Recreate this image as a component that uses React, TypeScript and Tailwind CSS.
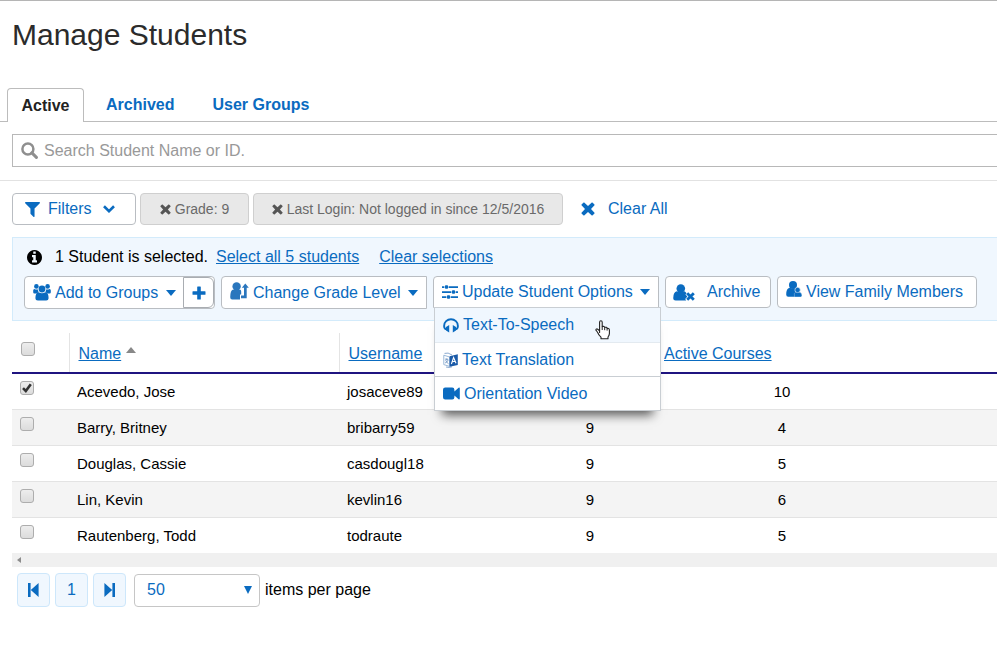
import React, { useState } from "react";

const FONT = "font-['Liberation_Sans',Arial,sans-serif]";

type IconProps = { className?: string };

function FilterIcon({ className }: IconProps) {
  return (
    <svg viewBox="192 256 1408 1408" className={className} fill="currentColor" aria-hidden="true">
      <path d="M1595 295q17 41-14 70l-493 493v742q0 42-39 59-13 5-25 5-27 0-45-19l-256-256q-19-19-19-45v-486l-493-493q-31-29-14-70 17-39 59-39h1280q42 0 59 39z" />
    </svg>
  );
}

function SearchIcon({ className }: IconProps) {
  return (
    <svg viewBox="0 0 17 17" className={className} aria-hidden="true">
      <circle cx="6.9" cy="6.9" r="5.5" fill="none" stroke="currentColor" strokeWidth="2.5" />
      <path d="M10.9 10.9L15.4 15.4" stroke="currentColor" strokeWidth="3" strokeLinecap="round" />
    </svg>
  );
}

function InfoIcon({ className }: IconProps) {
  return (
    <svg viewBox="128 128 1536 1536" className={className} fill="currentColor" aria-hidden="true">
      <path d="M1152 1376v-160q0-14-9-23t-23-9h-96v-512q0-14-9-23t-23-9h-320q-14 0-23 9t-9 23v160q0 14 9 23t23 9h96v320h-96q-14 0-23 9t-9 23v160q0 14 9 23t23 9h448q14 0 23-9t9-23zm-128-896v-160q0-14-9-23t-23-9h-192q-14 0-23 9t-9 23v160q0 14 9 23t23 9h192q14 0 23-9t9-23zm640 416q0 209-103 385.5t-279.5 279.5-385.5 103-385.5-103-279.5-279.5-103-385.5 103-385.5 279.5-279.5 385.5-103 385.5 103 279.5 279.5 103 385.5z" />
    </svg>
  );
}

function RemoveIcon({ className }: IconProps) {
  return (
    <svg viewBox="0 0 14 14" className={className} fill="currentColor" aria-hidden="true">
      <path d="M3.2 0.5 L7 4 L10.8 0.5 H11.4 L13.5 2.6 V3.2 L10 7 L13.5 10.8 V11.4 L11.4 13.5 H10.8 L7 10 L3.2 13.5 H2.6 L0.5 11.4 V10.8 L4 7 L0.5 3.2 V2.6 L2.6 0.5 Z" />
    </svg>
  );
}

function ChevronIcon({ className }: IconProps) {
  return (
    <svg viewBox="0 0 12 8" className={className} fill="none" stroke="currentColor" strokeWidth="2.6" aria-hidden="true">
      <path d="M1 1.3 L6 6.2 L11 1.3" />
    </svg>
  );
}

function PlusIcon({ className }: IconProps) {
  return (
    <svg viewBox="0 0 14 14" className={className} fill="currentColor" aria-hidden="true">
      <path d="M5.7 0.5h2.6a.5.5 0 0 1 .5.5v4.2H13a.5.5 0 0 1 .5.5v2.6a.5.5 0 0 1-.5.5H8.8V13a.5.5 0 0 1-.5.5H5.7a.5.5 0 0 1-.5-.5V8.8H1a.5.5 0 0 1-.5-.5V5.7a.5.5 0 0 1 .5-.5h4.2V1a.5.5 0 0 1 .5-.5z" />
    </svg>
  );
}

function CaretIcon({ className }: IconProps) {
  return (
    <svg viewBox="0 0 10 6" className={className} fill="currentColor" aria-hidden="true">
      <path d="M0 0h10L5 6z" />
    </svg>
  );
}

function GroupIcon({ className }: IconProps) {
  return (
    <svg viewBox="0 0 18 17" className={className} fill="currentColor" aria-hidden="true">
      <circle cx="3.4" cy="2.4" r="2.3" />
      <circle cx="14.6" cy="2.4" r="2.3" />
      <circle cx="9" cy="5" r="3.4" />
      <path d="M0.2 8.2V6.4Q0.2 5 1.4 4.9Q3.4 6 4.7 5.3Q4.9 7 5.7 8.2Q4.6 8.6 3.8 9.4H1.4Q0.2 9.4 0.2 8.2z" />
      <path d="M17.8 8.2V6.4Q17.8 5 16.6 4.9Q14.6 6 13.3 5.3Q13.1 7 12.3 8.2Q13.4 8.6 14.2 9.4H16.6Q17.8 9.4 17.8 8.2z" />
      <path d="M5.6 8.3Q9 10.2 12.4 8.3Q15.6 8.6 15.6 14.2Q15.6 16.6 13.2 16.6H4.8Q2.4 16.6 2.4 14.2Q2.4 8.6 5.6 8.3z" />
    </svg>
  );
}

function GradeIcon({ className }: IconProps) {
  return (
    <svg viewBox="0 0 19 18" className={className} fill="#2a76bd" aria-hidden="true">
      <circle cx="6.6" cy="4.4" r="4.2" />
      <path d="M3.2 7.4Q6.6 8.8 10 7.4Q11.2 8 11.2 9.4V12.6H10V17.6H2.2Q0.2 17.6 0.2 15.2Q0.2 8.2 3.2 7.4z" />
      <path d="M15.3 1.4L18.8 5.8H16.7V16.2H11V13.6H14V5.8H11.8z" />
    </svg>
  );
}

function SlidersIcon({ className }: IconProps) {
  return (
    <svg viewBox="0 0 16 14" className={className} fill="currentColor" aria-hidden="true">
      <path d="M0 1.2h2.4v1.7H0zM6.6 1.2H16v1.7H6.6zM0 6.2h9.4v1.7H0zM13.6 6.2H16v1.7h-2.4zM0 11.2h4.4v1.7H0zM8.6 11.2H16v1.7H8.6z" />
      <rect x="3" y="0.3" width="3" height="3.5" rx="0.7" />
      <rect x="10" y="5.3" width="3" height="3.5" rx="0.7" />
      <rect x="5" y="10.3" width="3" height="3.5" rx="0.7" />
    </svg>
  );
}

function UserRemoveIcon({ className }: IconProps) {
  return (
    <svg viewBox="0 0 22 17" className={className} aria-hidden="true">
      <circle cx="7.8" cy="4.5" r="4.3" fill="currentColor" />
      <path
        d="M3.8 7.2Q7.8 8.8 11.6 7.2Q12.8 8 13.6 9.6L12.4 10.4L14.4 12.6L12.2 15L13.2 16.6H2.6Q0.2 16.6 0.2 14.2Q0.2 8 3.8 7.2z"
        fill="currentColor"
      />
      <path d="M14.2 9.2L20.8 15.8M20.8 9.2L14.2 15.8" stroke="currentColor" strokeWidth="2.8" />
    </svg>
  );
}

function FamilyIcon({ className }: IconProps) {
  return (
    <svg viewBox="0 0 16 16" className={className} aria-hidden="true">
      <circle cx="7" cy="4.1" r="4" fill="currentColor" />
      <path d="M3.6 6.8Q7 8.2 10.4 6.8L13 10V15.8H2.2Q0.2 15.8 0.2 13.6Q0.2 7.4 3.6 6.8z" fill="currentColor" />
      <circle cx="11.6" cy="9" r="2.7" fill="currentColor" stroke="#fff" strokeWidth="0.6" />
      <path
        d="M9.6 11.2Q11.6 12 13.4 11.2Q15.9 11.6 15.9 14.6Q15.9 15.9 14.6 15.9H8.6Q7.4 12 9.6 11.2z"
        fill="currentColor"
        stroke="#fff"
        strokeWidth="0.3"
      />
    </svg>
  );
}

function HeadphonesIcon({ className }: IconProps) {
  return (
    <svg viewBox="0 0 16 15" className={className} aria-hidden="true">
      <path
        d="M3.4 11.4Q1.1 10.6 1.1 7.9A6.9 6.7 0 0 1 14.9 7.9Q14.9 10.6 12.6 11.4"
        fill="none"
        stroke="currentColor"
        strokeWidth="1.9"
      />
      <path d="M3 9L6.2 7V14.4L3 12.4zM13 9L9.8 7V14.4L13 12.4z" fill="currentColor" />
    </svg>
  );
}

function TranslateIcon({ className }: IconProps) {
  return (
    <svg viewBox="0 0 15 16" className={className} aria-hidden="true">
      <path d="M0.8 3.2L6.6 5V14.4L0.8 12.6z" fill="#fff" stroke="#8fb0d4" strokeWidth="0.9" />
      <path d="M2 7L5.6 8M3.9 6V8M4.9 8.2Q4.2 10.6 2 11M2.6 8Q3.6 10.8 5.6 11.8" fill="none" stroke="#6c93c2" strokeWidth="0.8" />
      <path d="M1.5 1.4Q5 0 9 3M3 15Q6 16 9 14.8" fill="none" stroke="#7d9fca" strokeWidth="0.9" />
      <path d="M6.6 4.2L14.8 2.2V13L6.6 14.8z" fill="#1b5ba8" />
      <path d="M8.4 12L10.6 5.6L13 11.2M9.4 9.8L12.1 9.2" fill="none" stroke="#fff" strokeWidth="1.1" />
    </svg>
  );
}

function VideoIcon({ className }: IconProps) {
  return (
    <svg viewBox="0 0 17 13" className={className} fill="currentColor" aria-hidden="true">
      <path d="M2.2 0.5H9.2Q11.4 0.5 11.4 2.7V4.6L15.6 0.8Q16.8 0.2 16.8 1.4V11.6Q16.8 12.8 15.6 12.2L11.4 8.4V10.3Q11.4 12.5 9.2 12.5H2.2Q0 12.5 0 10.3V2.7Q0 0.5 2.2 0.5z" />
    </svg>
  );
}

function HandCursor({ className }: IconProps) {
  return (
    <svg viewBox="0 0 16 20" className={className} aria-hidden="true">
      <path
        d="M4.6 12.4V2.2Q4.6 0.7 5.9 0.7Q7.2 0.7 7.2 2.2V6.6Q9.4 5.8 9.7 7.4Q11.8 6.8 12.1 8.4Q14.4 8 14.4 10.2V13.6Q14.4 15.4 13 17V18.8H6V17.2Q3.6 15 2.8 12.8Q1.8 11.2 0.9 10.2Q0.9 8.8 2.2 8.9Q3.4 9.3 4.6 11z"
        fill="#fff"
        stroke="#222"
        strokeWidth="1.1"
        strokeLinejoin="round"
      />
      <path d="M7.2 6.6V10M9.7 7.4V10.2M12.1 8.4V10.6" fill="none" stroke="#222" strokeWidth="1" />
    </svg>
  );
}

function FirstPageIcon({ className }: IconProps) {
  return (
    <svg viewBox="0 0 11 14" className={className} fill="currentColor" aria-hidden="true">
      <path d="M0 0h2.6v14H0zM10.6 0v14L2.8 7z" />
    </svg>
  );
}

const BUTTON = "flex items-center border border-[#b9bdc2] bg-white text-[#0a6bc0]";
const PAGER = "flex h-[34px] w-[33px] items-center justify-center rounded border border-[#cde7fb] bg-[#f0f7fe]";

function Checkbox({ label, checked = false }: { label: string; checked?: boolean }) {
  return (
    <span className="relative block size-[14px]">
      <input
        type="checkbox"
        aria-label={label}
        defaultChecked={checked}
        className="peer block size-[14px] appearance-none rounded-[3px] border border-[#adadad] bg-gradient-to-b from-[#ededed] to-[#dcdcdc]"
      />
      <svg viewBox="0 0 14 14" className="pointer-events-none absolute inset-0 hidden peer-checked:block" aria-hidden="true">
        <path d="M3 7.2L5.8 10L10.8 3.2" fill="none" stroke="#333" strokeWidth="2.6" />
      </svg>
    </span>
  );
}

const TABS = ["Active", "Archived", "User Groups"];

const STUDENTS = [
  { name: "Acevedo, Jose", username: "josaceve89", grade: null, courses: 10, selected: true },
  { name: "Barry, Britney", username: "bribarry59", grade: 9, courses: 4, selected: false },
  { name: "Douglas, Cassie", username: "casdougl18", grade: 9, courses: 5, selected: false },
  { name: "Lin, Kevin", username: "kevlin16", grade: 9, courses: 6, selected: false },
  { name: "Rautenberg, Todd", username: "todraute", grade: 9, courses: 5, selected: false },
];

function Chip({ text, className }: { text: string; className: string }) {
  return (
    <button
      type="button"
      className={`flex h-8 items-center justify-center gap-1 rounded border border-[#cfcfcf] bg-[#e8e8e8] text-sm text-[#6a6a6a] ${className}`}
    >
      <RemoveIcon className="size-[11px] text-[#555]" />
      {text}
    </button>
  );
}

function OptionsMenu() {
  const item = "flex h-[34px] w-full items-center gap-1 pl-2 text-left";
  return (
    <div className="absolute top-[31px] left-px z-10 w-[227px] border border-[#c9ced3] bg-white text-[#0a6bc0] shadow-[0_12px_10px_-8px_rgba(0,0,0,0.65)]">
      <button type="button" className={`${item} bg-[#f0f7fe]`}>
        <HeadphonesIcon className="h-[15px] w-4" />
        Text-To-Speech
      </button>
      <button type="button" className={`${item} border-t border-[#e3eaf0]`}>
        <TranslateIcon className="h-4 w-[15px]" />
        Text Translation
      </button>
      <button type="button" className={`${item} border-t border-[#c9ced3]`}>
        <VideoIcon className="h-[13px] w-[17px]" />
        Orientation Video
      </button>
      <HandCursor className="absolute top-3 left-40 h-5 w-4" />
    </div>
  );
}

export default function App() {
  const [tab, setTab] = useState("Active");
  return (
    <main className={`${FONT} min-h-screen overflow-hidden border-t border-[#b5b5b5] bg-white text-base text-black`}>
      <h1 className="px-3 pt-4 text-[30px] leading-9 text-[#2b2b2b]">Manage Students</h1>

      <nav className="mt-[35px] flex h-[34px] border-b border-[#bcbcbc] pl-[7px] font-bold">
        {TABS.map((name) => (
          <button
            key={name}
            type="button"
            onClick={() => setTab(name)}
            className={
              name === tab
                ? "mr-[3px] -mb-px w-[77px] rounded-t border border-b-0 border-[#bcbcbc] bg-white text-[#222]"
                : "px-[19px] text-[#0a6bc0]"
            }
          >
            {name}
          </button>
        ))}
      </nav>

      <div className="border-b border-[#e2e2e2] pt-3 pb-[13px] pl-3">
        <label className="flex h-[33px] items-center gap-[6px] border border-r-0 border-[#b8b8b8] pl-2">
          <SearchIcon className="size-[17px] text-[#8f8f8f]" />
          <input
            type="text"
            aria-label="Search students"
            placeholder="Search Student Name or ID."
            className="h-full flex-1 bg-transparent outline-none placeholder:text-[#999]"
          />
        </label>
      </div>

      <div className="flex items-center pt-3 pl-3">
        <button type="button" className={`${BUTTON} h-8 w-[124px] rounded pl-3`}>
          <FilterIcon className="size-[15px]" />
          <span className="ml-2">Filters</span>
          <ChevronIcon className="ml-[11px] h-2 w-3" />
        </button>
        <Chip text="Grade: 9" className="ml-1 w-[109px]" />
        <Chip text="Last Login: Not logged in since 12/5/2016" className="ml-1 w-[310px]" />
        <button type="button" className="ml-[18px] flex items-center gap-[13px] text-[#0a6bc0]">
          <RemoveIcon className="size-[14px]" />
          Clear All
        </button>
      </div>

      <section className="mt-3 ml-3 border border-r-0 border-[#d3ebfb] bg-[#f0f7fe] pt-[7px] pb-[11px] pl-[11px]">
        <div className="flex h-6 items-center">
          <InfoIcon className="ml-[3px] size-[15px]" />
          <p className="ml-[13px]">1 Student is selected.</p>
          <a href="#all" className="ml-2 text-[#0a6bc0] underline">Select all 5 students</a>
          <a href="#clear" className="ml-5 text-[#0a6bc0] underline">Clear selections</a>
        </div>
        <div className="mt-[7px] flex items-start gap-[6px]">
          <div className="flex h-[33px] rounded border border-[#b9bdc2] bg-white text-[#0a6bc0]">
            <button type="button" className="flex w-[158px] items-center pr-[7px] pl-2">
              <GroupIcon className="h-[17px] w-[18px]" />
              <span className="ml-1">Add to Groups</span>
              <CaretIcon className="ml-auto h-[6px] w-[10px]" />
            </button>
            <button
              type="button"
              aria-label="Add group"
              className="flex h-[31px] w-[31px] items-center justify-center rounded-r-md border border-[#a9adb2]"
            >
              <PlusIcon className="size-[14px]" />
            </button>
          </div>
          <button type="button" className={`${BUTTON} h-[33px] w-[206px] rounded-l px-2`}>
            <GradeIcon className="mb-1 h-[18px] w-[19px]" />
            <span className="ml-1">Change Grade Level</span>
            <CaretIcon className="ml-auto h-[6px] w-[10px]" />
          </button>
          <div className="relative">
            <button type="button" aria-expanded="true" className={`${BUTTON} h-8 w-[226px] rounded-tl px-2`}>
              <SlidersIcon className="h-[14px] w-4" />
              <span className="ml-1">Update Student Options</span>
              <CaretIcon className="ml-auto h-[6px] w-[10px]" />
            </button>
            <OptionsMenu />
          </div>
          <button type="button" className={`${BUTTON} h-8 w-[106px] rounded pl-[7px]`}>
            <UserRemoveIcon className="h-[17px] w-[22px]" />
            <span className="ml-3">Archive</span>
          </button>
          <button type="button" className={`${BUTTON} h-8 w-[200px] rounded pl-2`}>
            <FamilyIcon className="mb-[6px] h-4 w-4" />
            <span className="ml-1">View Family Members</span>
          </button>
        </div>
      </section>

      <div className="mt-3 pl-3">
        <table className="w-full table-fixed border-collapse">
          <colgroup>
            <col className="w-[57px]" />
            <col className="w-[270px]" />
            <col className="w-[186px]" />
            <col className="w-[130px]" />
            <col className="w-[254px]" />
            <col />
          </colgroup>
          <thead>
            <tr className="h-10 border-b-2 border-[#1f1480] text-left text-[#0a6bc0]">
              <th className="pb-2 pl-[9px] font-normal"><Checkbox label="Select all" /></th>
              <th className="border-l border-[#e4e4e4] pt-[2px] pl-[9px] font-normal">
                <span className="flex items-center gap-[5px]">
                  <a href="#name" className="underline">Name</a>
                  <svg viewBox="0 0 10 6" className="mb-2 h-[6px] w-[10px]" aria-hidden="true">
                    <path d="M0 6L5 0L10 6z" fill="#888" />
                  </svg>
                </span>
              </th>
              <th className="border-l border-[#e4e4e4] pt-[2px] pl-[9px] font-normal">
                <a href="#username" className="underline">Username</a>
              </th>
              <th />
              <th className="pt-[2px] pl-[9px] font-normal">
                <a href="#courses" className="underline">Active Courses</a>
              </th>
              <th />
            </tr>
          </thead>
          <tbody className="text-[15px]">
            {STUDENTS.map((s) => (
              <tr key={s.username} className="h-9 border-b border-[#e3e3e3] last:border-b-0 even:bg-[#f4f4f4]">
                <td className="pb-[6px] pl-2"><Checkbox label={`Select ${s.name}`} checked={s.selected} /></td>
                <td className="pt-[2px] pl-2">{s.name}</td>
                <td className="pt-[2px] pl-2">{s.username}</td>
                <td className="pt-[2px] text-center">{s.grade}</td>
                <td className="pt-[2px] text-center">{s.courses}</td>
                <td />
              </tr>
            ))}
          </tbody>
        </table>
        <div className="flex h-[14px] items-center bg-[#f0f0f0] pl-[5px]">
          <svg viewBox="0 0 4 6" className="h-[6px] w-1" aria-hidden="true">
            <path d="M4 0L0 3L4 6z" fill="#8c8c8c" />
          </svg>
        </div>
      </div>

      <footer className="flex items-center gap-[5px] pt-[6px] pl-[17px] text-[#0a6bc0]">
        <button type="button" aria-label="First page" className={PAGER}>
          <FirstPageIcon className="h-[14px] w-[11px]" />
        </button>
        <button type="button" className={PAGER}>
          1
        </button>
        <button type="button" aria-label="Last page" className={PAGER}>
          <FirstPageIcon className="h-[14px] w-[11px] rotate-180" />
        </button>
        <label className="ml-[3px] flex items-center gap-[5px] text-black">
          <span className="relative flex items-center text-[#0a6bc0]">
            <select className="h-[33px] w-[126px] appearance-none rounded border border-[#c6c6c6] bg-white pl-3">
              <option>50</option>
            </select>
            <svg viewBox="0 0 8 8" className="pointer-events-none absolute right-2 size-2" aria-hidden="true">
              <path d="M0 0h8L4 8z" fill="currentColor" />
            </svg>
          </span>
          items per page
        </label>
      </footer>
    </main>
  );
}
